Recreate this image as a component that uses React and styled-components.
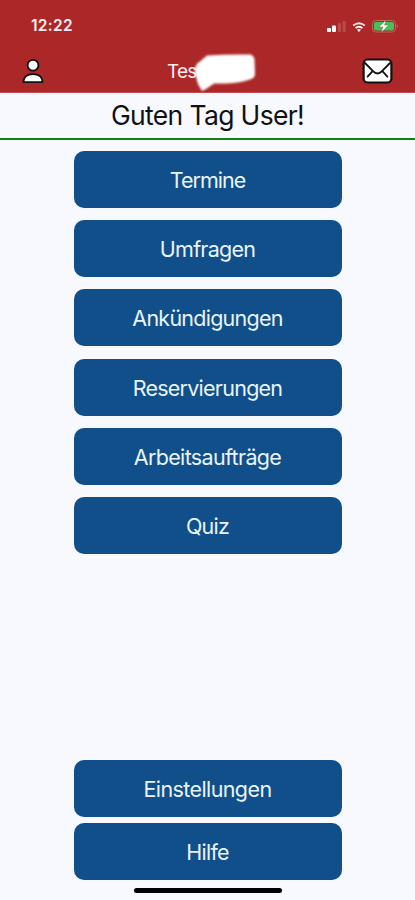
import React from 'react';
import styled, { createGlobalStyle } from 'styled-components';

const GlobalStyle = createGlobalStyle`
  * {
    box-sizing: border-box;
  }

  body {
    margin: 0;
    background-color: #f8f8ff;
    font-family: Inter, "Liberation Sans", sans-serif;
  }
`;

const Screen = styled.div`
  display: flex;
  flex-direction: column;
  width: 415px;
  height: 900px;
  overflow: hidden;
  background-color: #f8f8ff;
`;

const Header = styled.header`
  height: 93px;
  background-color: #ac2727;
  border-bottom: 1px solid #c04a4c;
  color: #fdeeee;
`;

const StatusBar = styled.div`
  display: flex;
  align-items: center;
  justify-content: space-between;
  height: 50px;
  padding: 1px 17px 0 31px;
`;

const Time = styled.span`
  font-size: 15.5px;
  font-weight: 600;
  letter-spacing: 0.3px;
`;

const NavBar = styled.div`
  display: grid;
  grid-template-columns: 32px 1fr 32px;
  align-items: center;
  height: 42px;
  padding: 0 22px 0 22px;
`;

const IconButton = styled.button`
  display: flex;
  justify-content: ${({ $end }) => ($end ? 'flex-end' : 'flex-start')};
  padding: 0;
  border: 0;
  background: none;
`;

const Title = styled.div`
  position: relative;
  height: 42px;
  padding-left: 113px;
  font-size: 19px;
  line-height: 43px;
  letter-spacing: -0.8px;

  svg {
    position: absolute;
    left: 136px;
    top: 0;
  }
`;

const Greeting = styled.h1`
  height: 47px;
  margin: 0;
  border-bottom: 2px solid #138016;
  color: #111;
  font-size: 26.5px;
  font-weight: 400;
  line-height: 45px;
  letter-spacing: -0.65px;
  text-align: center;
`;

const Menu = styled.nav`
  display: flex;
  flex-direction: column;
  flex: 1;
  align-items: center;
  gap: 12.35px;
  padding-top: 10.7px;
`;

const Footer = styled.footer`
  display: flex;
  flex-direction: column;
  align-items: center;
  gap: 6.3px;
  padding-bottom: 7.5px;
`;

const MenuButton = styled.button`
  width: 268px;
  height: 57px;
  padding: 1px 0 0;
  border: 0;
  border-radius: 10px;
  background-color: #104f89;
  color: #e9f3fb;
  font-family: inherit;
  font-size: 21.5px;
  letter-spacing: ${({ $spacing }) => $spacing || '-0.75px'};
`;

const HomeIndicator = styled.div`
  width: 148px;
  height: 5px;
  margin-top: 1px;
  border-radius: 3px;
  background-color: #000;
`;

const menuItems = [
  { label: 'Termine', spacing: '-1px' },
  { label: 'Umfragen' },
  { label: 'Ankündigungen' },
  { label: 'Reservierungen' },
  { label: 'Arbeitsaufträge', spacing: '-0.65px' },
  { label: 'Quiz' },
];

const footerItems = [
  { label: 'Einstellungen', spacing: '-0.6px' },
  { label: 'Hilfe' },
];

function StatusIcons() {
  return (
    <svg width="72" height="14" viewBox="0 0 72 14">
      <g fill="#fff">
        <rect x="1" y="9" width="4" height="4" rx="1" />
        <rect x="6" y="6.5" width="4" height="6.5" rx="1" />
        <rect x="12" y="4" width="3.1" height="9" rx="1" opacity=".17" />
        <rect x="16.6" y="2" width="3.1" height="11" rx="1" opacity=".17" />
      </g>
      <g fill="none" stroke="#fff" strokeWidth="1.9">
        <path d="M27.2 6.6Q33 2 38.8 6.6" opacity=".85" />
        <path d="M29.6 9Q33 6.4 36.4 9" />
      </g>
      <path d="M31 10.8Q33 9.3 35 10.8L33 13z" fill="#fff" />
      <rect x="46.5" y="1.5" width="23" height="11.5" rx="3.2" fill="none" stroke="#bd6559" />
      <rect x="48" y="3" width="20" height="8.5" rx="1.8" fill="#42c15c" />
      <path d="M70.8 5.5v3.4q1.2-.4 1.2-1.7t-1.2-1.7" fill="#bd6559" />
      <path
        d="M60 1 52.8 8h4l-1.6 5.5 7.6-7.4h-4.2z"
        fill="#fff"
        stroke="#ac4a35"
        strokeWidth=".5"
      />
    </svg>
  );
}

function PersonIcon() {
  return (
    <svg width="22" height="26" viewBox="0 0 22 26">
      <g fill="#fff" stroke="#111" strokeWidth="1.8" strokeLinejoin="round">
        <circle cx="11" cy="7.3" r="5.4" />
        <path d="M1.4 24.1c.3-4.8 3.8-7.9 9.6-7.9s9.3 3.1 9.6 7.9z" />
      </g>
    </svg>
  );
}

function MailIcon() {
  return (
    <svg width="31" height="26" viewBox="0 0 31 26">
      <rect x="1.6" y="1.5" width="27.8" height="23" rx="4" fill="#fff" stroke="#111" strokeWidth="2.2" />
      <g fill="none" stroke="#111" strokeWidth="1.8" strokeLinecap="round">
        <path d="m3 5 8 8.2q4.5 4.6 9 0L28 5" />
        <path d="m10.4 13.4-4.8 5.2M20.6 13.4l4.8 5.2" />
      </g>
    </svg>
  );
}

// Brushed patch over the end of the title
function TitlePatch() {
  return (
    <svg width="70" height="44" viewBox="0 0 70 44">
      <path
        d="M10 11.5 17 5.5Q38 4 60 4.5 64 5 64.5 10L65 24Q65 28 60 29.5 51 33 36 33.5H24L16 39 12 41 8 34 4.5 22Q5 14 10 11.5Z"
        fill="#fff"
        style={{ filter: 'blur(.8px)' }}
      />
    </svg>
  );
}

function App() {
  return (
    <>
      <GlobalStyle />
      <Screen>
        <Header>
          <StatusBar>
            <Time>12:22</Time>
            <StatusIcons />
          </StatusBar>
          <NavBar>
            <IconButton aria-label="Profil">
              <PersonIcon />
            </IconButton>
            <Title>
              Tes
              <TitlePatch />
            </Title>
            <IconButton $end aria-label="Nachrichten">
              <MailIcon />
            </IconButton>
          </NavBar>
        </Header>
        <Greeting>Guten Tag User!</Greeting>
        <Menu>
          {menuItems.map(({ label, spacing }) => (
            <MenuButton key={label} $spacing={spacing}>{label}</MenuButton>
          ))}
        </Menu>
        <Footer>
          {footerItems.map(({ label, spacing }) => (
            <MenuButton key={label} $spacing={spacing}>{label}</MenuButton>
          ))}
          <HomeIndicator />
        </Footer>
      </Screen>
    </>
  );
}

export default App;
